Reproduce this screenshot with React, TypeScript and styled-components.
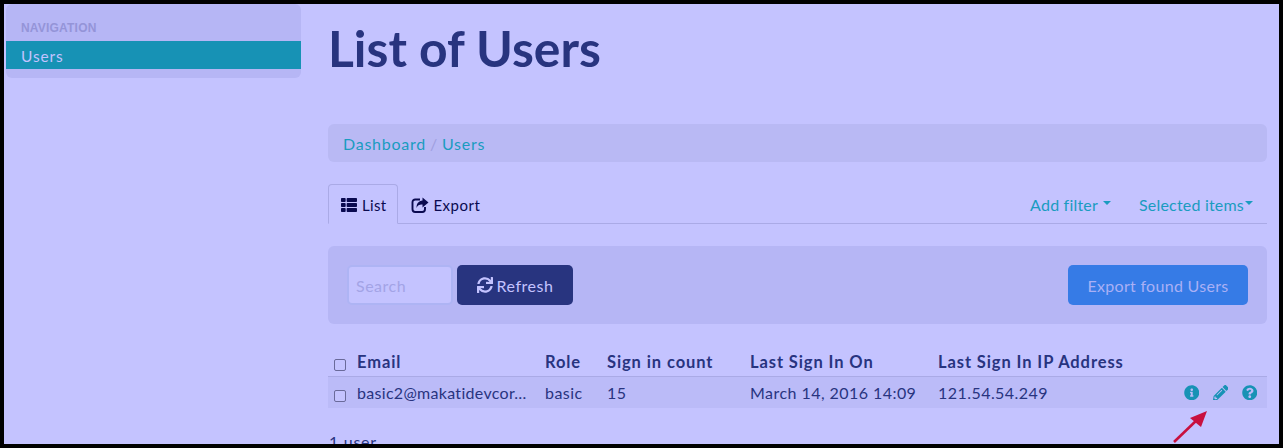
import * as React from "react";
import styled, { createGlobalStyle } from "styled-components";
import { FaThList, FaSync, FaInfoCircle, FaPencilAlt, FaQuestionCircle } from "react-icons/fa";

const GlobalStyle = createGlobalStyle`
  html, body {
    margin: 0;
    padding: 0;
    background: #000;
  }
  * {
    box-sizing: border-box;
  }
`;

const Frame = styled.div`
  position: relative;
  width: 1283px;
  height: 448px;
  overflow: hidden;
  border: 4px solid #000;
  background: #c4c3ff;
  font-family: "Lato", "Noto Sans", sans-serif;
  font-size: 16px;
  color: #28347f;
  display: flex;
  padding-left: 2px;
  gap: 27px;
`;

const Sidebar = styled.div`
  width: 295px;
  height: 74px;
  flex-shrink: 0;
  background: #b6b6f5;
  border-radius: 6px;
  padding-top: 17px;
`;

const NavHeading = styled.div`
  height: 20px;
  line-height: 14px;
  padding-left: 15px;
  font-family: "Liberation Sans", sans-serif;
  font-size: 12px;
  font-weight: 700;
  letter-spacing: 0.2px;
  color: #9494d8;
`;

const NavItem = styled.div`
  height: 28px;
  line-height: 30px;
  padding-left: 15px;
  background: #1792b5;
  color: #c4c3ff;
  font-size: 15.5px;
  letter-spacing: 0.9px;
`;

const Main = styled.div`
  width: 939px;
  flex-shrink: 0;
`;

const Title = styled.h1`
  margin: 16px 0 0;
  height: 104px;
  font-size: 49.8px;
  line-height: 56px;
  font-weight: 700;
  color: #28347f;
`;

const Crumbs = styled.div`
  height: 38px;
  display: flex;
  align-items: center;
  gap: 4px;
  padding-left: 15px;
  background: #b9b9f4;
  border-radius: 6px;
  font-size: 16px;
  letter-spacing: 0.75px;
`;

const Link = styled.span`
  color: #1a9cc0;
`;

const Slash = styled.span`
  color: #9f9fe0;
`;

const Tabs = styled.div`
  margin-top: 22px;
  height: 40px;
  display: flex;
  align-items: stretch;
  border-bottom: 1px solid #aaaae6;
`;

const Tab = styled.div<{ $active?: boolean }>`
  display: flex;
  align-items: center;
  gap: 4px;
  padding: 2px 11px 0 ${(p) => (p.$active ? "11px" : "12px")};
  margin-bottom: ${(p) => (p.$active ? "-1px" : "0")};
  color: #0a0a50;
  font-size: 15px;
  letter-spacing: ${(p) => (p.$active ? "0.3px" : "0.5px")};
  background: #c4c3ff;
  border: 1px solid ${(p) => (p.$active ? "#aaaae6" : "transparent")};
  border-bottom-color: ${(p) => (p.$active ? "#c4c3ff" : "transparent")};
  border-radius: 4px 4px 0 0;
  svg {
    width: 18px;
    height: 16px;
  }
`;

const TabActions = styled.div`
  margin-left: auto;
  display: flex;
  align-items: center;
  gap: 28px;
  padding: 1px 14px 0 0;
  font-size: 16px;
  letter-spacing: 0.2px;
  color: #1a9cc0;
`;

const Dropdown = styled.span<{ $gap: number }>`
  display: flex;
  align-items: center;
  gap: ${(p) => p.$gap}px;
  &::after {
    content: "";
    border-top: 4px solid #1a9cc0;
    border-left: 4px solid transparent;
    border-right: 4px solid transparent;
    margin-bottom: 3px;
  }
`;

const FilterPanel = styled.div`
  margin-top: 22px;
  height: 78px;
  display: flex;
  align-items: center;
  padding: 0 19px;
  background: #b6b6f5;
  border-radius: 6px;
`;

const SearchBox = styled.div`
  width: 106px;
  height: 40px;
  line-height: 37px;
  padding-left: 7px;
  border: 2px solid #aeb4f4;
  border-radius: 5px;
  background: #c4c3ff;
  color: #a3a3e6;
  font-size: 16px;
  letter-spacing: 0.5px;
`;

const RefreshButton = styled.div`
  margin-left: 4px;
  width: 116px;
  height: 40px;
  display: flex;
  align-items: center;
  justify-content: center;
  gap: 4px;
  background: #28347f;
  color: #c4c3ff;
  border-radius: 5px;
  font-size: 16px;
  letter-spacing: 0.5px;
`;

const ExportButton = styled.div`
  margin-left: auto;
  width: 180px;
  height: 40px;
  display: flex;
  align-items: center;
  justify-content: center;
  background: #367be6;
  color: #a9b0f5;
  border-radius: 5px;
  font-size: 16px;
  letter-spacing: 0.3px;
`;

const columns = "29px 188px 62px 143px 188px 1fr";

const HeadRow = styled.div`
  margin-top: 27px;
  height: 26px;
  padding-bottom: 4px;
  display: grid;
  grid-template-columns: ${columns};
  align-items: center;
  border-bottom: 1px solid #aaaae6;
  font-weight: 700;
  font-size: 16.5px;
  letter-spacing: 0.9px;
  color: #28347f;
`;

const BodyRow = styled.div`
  height: 31px;
  display: grid;
  grid-template-columns: ${columns};
  align-items: center;
  background: #bbbbf8;
  font-size: 16px;
  letter-spacing: 0.45px;
`;

const CheckCell = styled.div`
  display: flex;
  padding: 6px 0 0 6px;
`;

const Check = styled.span`
  width: 12px;
  height: 12px;
  border: 1px solid #6a6a9a;
  border-radius: 2px;
  background: #c4c3ff;
`;

const EmailText = styled.span`
  letter-spacing: 0.3px;
  white-space: nowrap;
`;

const IpAndActions = styled.div`
  display: flex;
  justify-content: space-between;
  align-items: center;
`;

const ActionsCell = styled.div`
  display: flex;
  justify-content: flex-end;
  align-items: center;
  gap: 13.5px;
  padding-right: 10px;
  color: #1792b5;
  svg {
    width: 15.5px;
    height: 15.5px;
  }
`;

const Footer = styled.div`
  margin-top: 24px;
  padding-left: 1px;
  font-size: 16px;
  line-height: 20px;
  letter-spacing: 0.7px;
`;

const Arrow = styled.svg`
  position: absolute;
  left: 1165px;
  top: 403px;
`;

const ShareIcon = () => (
  <svg viewBox="0 0 18 16" fill="currentColor">
    <path
      d="M9 2.5H4.2A2.7 2.7 0 0 0 1.5 5.2v7.1A2.7 2.7 0 0 0 4.2 15h7.1a2.7 2.7 0 0 0 2.7-2.7V10"
      fill="none"
      stroke="currentColor"
      strokeWidth="1.9"
    />
    <path d="M11.5 0.5L17.5 5.5L11.5 10.5V7.6C8.5 7.4 6.6 8.3 5.6 11C5.3 6.6 7.6 3.7 11.5 3.4Z" />
  </svg>
);

export default function App() {
  return (
    <>
      <GlobalStyle />
      <Frame>
        <Sidebar>
          <NavHeading>NAVIGATION</NavHeading>
          <NavItem>Users</NavItem>
        </Sidebar>
        <Main>
          <Title>List of Users</Title>
          <Crumbs>
            <Link>Dashboard</Link>
            <Slash>/</Slash>
            <Link>Users</Link>
          </Crumbs>
          <Tabs>
            <Tab $active>
              <FaThList />
              List
            </Tab>
            <Tab>
              <ShareIcon />
              Export
            </Tab>
            <TabActions>
              <Dropdown $gap={5}>Add filter</Dropdown>
              <Dropdown $gap={1}>Selected items</Dropdown>
            </TabActions>
          </Tabs>
          <FilterPanel>
            <SearchBox>Search</SearchBox>
            <RefreshButton>
              <FaSync />
              Refresh
            </RefreshButton>
            <ExportButton>Export found Users</ExportButton>
          </FilterPanel>
          <HeadRow>
            <CheckCell>
              <Check />
            </CheckCell>
            <span>Email</span>
            <span>Role</span>
            <span>Sign in count</span>
            <span>Last Sign In On</span>
            <span>Last Sign In IP Address</span>
          </HeadRow>
          <BodyRow>
            <CheckCell>
              <Check />
            </CheckCell>
            <EmailText>basic2@makatidevcor…</EmailText>
            <span>basic</span>
            <span>15</span>
            <span>March 14, 2016 14:09</span>
            <IpAndActions>
              <span>121.54.54.249</span>
              <ActionsCell>
                <FaInfoCircle />
                <FaPencilAlt />
                <FaQuestionCircle />
              </ActionsCell>
            </IpAndActions>
          </BodyRow>
          <Footer>1 user</Footer>
        </Main>
        <Arrow width="44" height="38" viewBox="0 0 44 38">
          <path d="M5 35 L30 11" stroke="#c8103f" strokeWidth="2.6" fill="none" />
          <path d="M38 4 L21 11 L32 20 Z" fill="#c8103f" />
        </Arrow>
      </Frame>
    </>
  );
}
